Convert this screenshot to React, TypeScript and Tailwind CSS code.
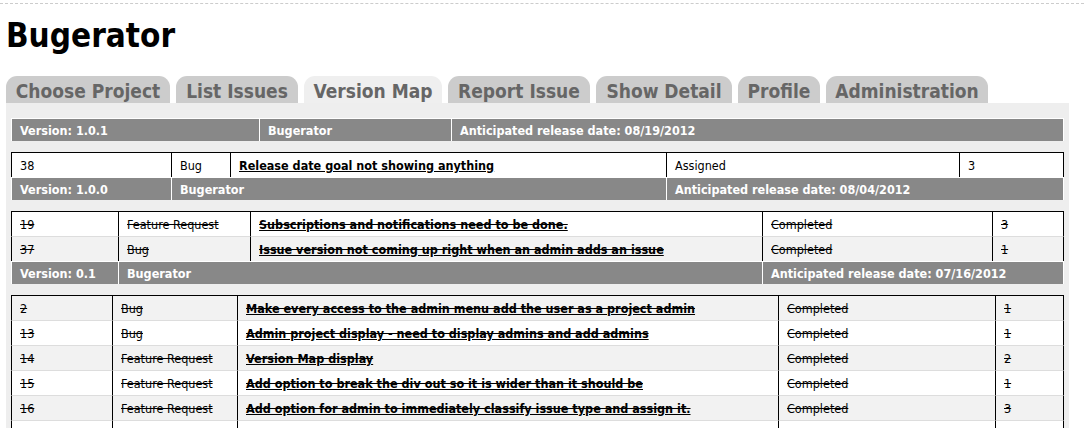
import React from "react";

type Issue = { id: string; type: string; title: string; status: string; pri: string; done: boolean; bg: string };

const FONT = "font-[family-name:'DejaVu_Sans_Condensed','DejaVu_Sans',sans-serif] font-stretch-semi-condensed";

function IssueCells({ issue, first }: { issue: Issue | null; first: boolean }) {
  const top = first ? "border-t-black" : "border-t-[#dddddd]";
  const base = `h-[25px] border-t border-l border-l-black ${top} flex items-center pl-[8px] pt-[2px] whitespace-nowrap overflow-hidden text-[12.5px] text-black`;
  const strike = issue && issue.done ? "line-through" : "";
  const bg = issue ? issue.bg : "bg-white";
  return (
    <>
      <div className={`${base} ${bg}`}><span className={strike}>{issue?.id}</span></div>
      <div className={`${base} ${bg}`}><span className={strike}>{issue?.type}</span></div>
      <div className={`${base} ${bg}`}>
        <span className={`font-bold ${issue && issue.done ? "[text-decoration-line:underline_line-through]" : "underline"}`}>{issue?.title}</span>
      </div>
      <div className={`${base} ${bg}`}><span className={strike}>{issue?.status}</span></div>
      <div className={`${base} ${bg} border-r border-r-black`}><span className={strike}>{issue?.pri}</span></div>
    </>
  );
}

function HeaderCell({ text, span, last }: { text: string; span?: boolean; last?: boolean }) {
  return (
    <div
      className={`h-[23px] border-t border-l border-white bg-[#888888] text-white font-bold text-[12.5px] flex items-center pl-[8px] pt-[2px] whitespace-nowrap overflow-hidden ${span ? "col-span-2" : ""} ${last ? "border-r" : ""}`}
    >
      {text}
    </div>
  );
}

const tabs = [
  { label: "Choose Project", w: "w-[164px]" },
  { label: "List Issues", w: "w-[122px]" },
  { label: "Version Map", w: "w-[138px]", active: true },
  { label: "Report Issue", w: "w-[142px]" },
  { label: "Show Detail", w: "w-[136px]" },
  { label: "Profile", w: "w-[82px]" },
  { label: "Administration", w: "w-[162px]" },
];

const W = "bg-white";
const G = "bg-[#f2f2f2]";

const blockB: Issue[] = [
  { id: "38", type: "Bug", title: "Release date goal not showing anything", status: "Assigned", pri: "3", done: false, bg: W },
];
const blockC: Issue[] = [
  { id: "19", type: "Feature Request", title: "Subscriptions and notifications need to be done.", status: "Completed", pri: "3", done: true, bg: W },
  { id: "37", type: "Bug", title: "Issue version not coming up right when an admin adds an issue", status: "Completed", pri: "1", done: true, bg: G },
];
const blockD: Issue[] = [
  { id: "2", type: "Bug", title: "Make every access to the admin menu add the user as a project admin", status: "Completed", pri: "1", done: true, bg: G },
  { id: "13", type: "Bug", title: "Admin project display - need to display admins and add admins", status: "Completed", pri: "1", done: true, bg: W },
  { id: "14", type: "Feature Request", title: "Version Map display", status: "Completed", pri: "2", done: true, bg: G },
  { id: "15", type: "Feature Request", title: "Add option to break the div out so it is wider than it should be", status: "Completed", pri: "1", done: true, bg: W },
  { id: "16", type: "Feature Request", title: "Add option for admin to immediately classify issue type and assign it.", status: "Completed", pri: "3", done: true, bg: G },
];

export default function App() {
  return (
    <div className={`${FONT} bg-white min-h-[428px] w-[1084px] pt-[3px]`}>
      <div className="border-t border-dashed border-[#cccccc]" />
      <h1 className="ml-[6px] mt-[16px] text-[33px] leading-[32px] font-bold text-black">Bugerator</h1>
      <div className="ml-[6px] mt-[24px] flex gap-[6px]">
        {tabs.map((t) => (
          <div
            key={t.label}
            className={`${t.w} h-[27px] rounded-t-[11px] flex items-center justify-center text-[19px] font-bold text-[#666666] leading-[27px] pt-[4px] whitespace-nowrap ${t.active ? "bg-[#efefef]" : "bg-[#cccccc]"}`}
          >
            {t.label}
          </div>
        ))}
      </div>
      <div className="ml-[6px] w-[1063px] bg-[#eeeeee] px-[5px] pt-[15px] pb-[20px]">
        <div className="grid grid-cols-[248px_192px_613px]">
          <HeaderCell text="Version: 1.0.1" />
          <HeaderCell text="Bugerator" />
          <HeaderCell text="Anticipated release date: 08/19/2012" last />
        </div>
        <div className="mt-[11px] grid grid-cols-[160px_59px_436px_293px_105px]">
          {blockB.map((i, k) => (
            <IssueCells key={i.id} issue={i} first={k === 0} />
          ))}
          <HeaderCell text="Version: 1.0.0" />
          <HeaderCell text="Bugerator" span />
          <HeaderCell text="Anticipated release date: 08/04/2012" span last />
        </div>
        <div className="mt-[11px] grid grid-cols-[107px_132px_512px_230px_72px]">
          {blockC.map((i, k) => (
            <IssueCells key={i.id} issue={i} first={k === 0} />
          ))}
          <HeaderCell text="Version: 0.1" />
          <HeaderCell text="Bugerator" span />
          <HeaderCell text="Anticipated release date: 07/16/2012" span last />
        </div>
        <div className="mt-[11px] grid grid-cols-[101px_125px_541px_217px_69px]">
          {blockD.map((i, k) => (
            <IssueCells key={i.id} issue={i} first={k === 0} />
          ))}
          <IssueCells issue={null} first={false} />
        </div>
      </div>
    </div>
  );
}
